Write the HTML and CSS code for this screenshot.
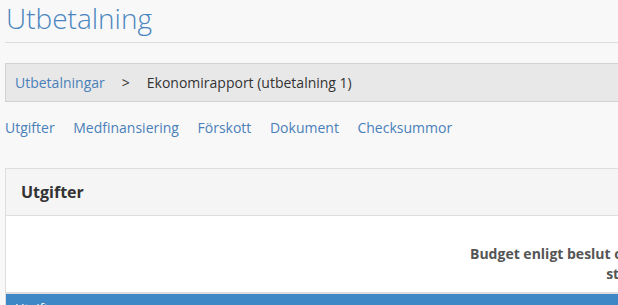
FILE: index.html
```html
<!DOCTYPE html>
<html lang="sv">
<head>
    <meta charset="UTF-8">
    <title>Utbetalning</title>
    <link rel="stylesheet" href="styles.css">
</head>
<body>
    <div class="page">
        <h1 class="page-title">Utbetalning</h1>

        <div class="breadcrumb">
            <a href="#">Utbetalningar</a>
            <span class="sep">&gt;</span>
            <span class="current">Ekonomirapport (utbetalning 1)</span>
        </div>

        <nav class="tabs">
            <a href="#">Utgifter</a>
            <a href="#">Medfinansiering</a>
            <a href="#">Förskott</a>
            <a href="#">Dokument</a>
            <a href="#">Checksummor</a>
        </nav>

        <div class="panel">
            <div class="panel-heading">Utgifter</div>
            <div class="panel-body">
                <table class="cost-table">
                    <thead>
                        <tr>
                            <th class="col-name"></th>
                            <th class="col-budget">Budget enligt beslut om<br>stöd</th>
                            <th class="col-rest"></th>
                        </tr>
                    </thead>
                </table>
            </div>
            <div class="group-bar">Utgifter</div>
        </div>
    </div>
</body>
</html>
```

FILE: styles.css
```css
body {
    margin: 0;
    padding: 0;
    background: #f8f8f8;
    font-family: 'Open Sans', 'Liberation Sans', sans-serif;
    font-size: 14px;
    line-height: 20px;
    color: #333;
    overflow: hidden;
}

a {
    color: #4a80b9;
    text-decoration: none;
}

.page {
    width: 900px;
    padding: 0 5px;
}

.page-title {
    margin: 0;
    padding: 4px 1px 10px;
    font-size: 28px;
    font-weight: 300;
    line-height: 28px;
    color: #4a86c0;
    border-bottom: 1px solid #dcdcdc;
}

.breadcrumb {
    margin-top: 20px;
    height: 37px;
    display: flex;
    align-items: center;
    padding: 0 9px;
    background: #e8e8e8;
    border: 1px solid #d2d2d2;
}

.breadcrumb .sep {
    margin: 0 17px;
    color: #333;
}

.tabs {
    display: flex;
    gap: 18.6px;
    margin-top: 16px;
}

.panel {
    margin-top: 30px;
    border: 1px solid #dddddd;
    border-bottom: none;
    background: #fff;
}

.panel-heading {
    height: 46px;
    display: flex;
    align-items: center;
    padding: 0 15px;
    background: #f5f5f5;
    border-bottom: 1px solid #dddddd;
    font-size: 16px;
    font-weight: 700;
    color: #333;
}

.panel-body {
    height: 76px;
    display: flex;
    align-items: flex-end;
}

.cost-table {
    border-collapse: collapse;
    width: 100%;
}

.cost-table th {
    padding: 0 0 8px;
    font-weight: 700;
    color: #555;
    white-space: nowrap;
}

.col-name {
    width: 464px;
}

.col-budget {
    width: 166px;
    text-align: right;
}

.group-bar {
    border-top: 2px solid #dddddd;
    background: #3d87c7;
    color: #fff;
    padding: 4px 9px 0;
    height: 30px;
    line-height: 20px;
    font-size: 13px;
}
```
